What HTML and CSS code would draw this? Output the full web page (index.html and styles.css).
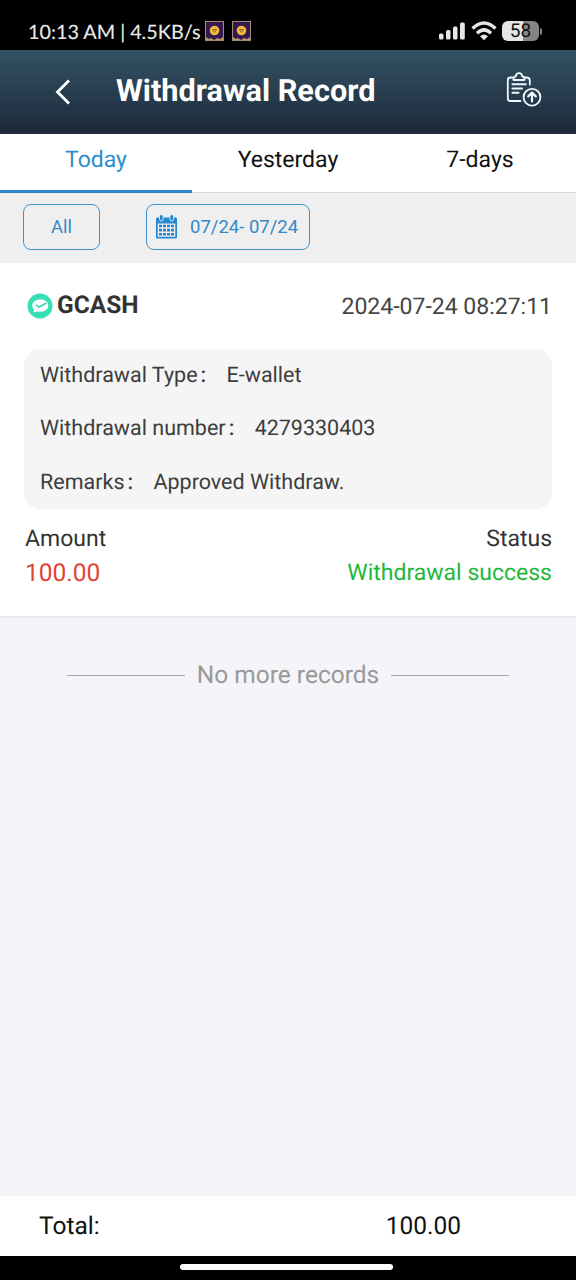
FILE: index.html
```html
<!DOCTYPE html>
<html lang="en">
<head>
<meta charset="utf-8">
<title>Withdrawal Record</title>
<link rel="stylesheet" href="styles.css">
</head>
<body>
<div class="status-bar">
  <span class="clock">10:13 AM | 4.5KB/s</span>
  <svg class="app-icon" viewBox="0 0 19 20"><rect x=".5" y=".5" width="18" height="19" fill="#34184f" stroke="#a08c72"/><path d="M1 16l3 2 2-1 3 2 3-2 3 1 3-2v3H1z" fill="#b59a6c"/><circle cx="9.5" cy="9.5" r="4.800" fill="#f0b83c"/><path d="M7.500 8.500h4l-2 2.800z" fill="none" stroke="#a8641f" stroke-width="1"/></svg>
  <svg class="app-icon" viewBox="0 0 19 20"><rect x=".5" y=".5" width="18" height="19" fill="#34184f" stroke="#a08c72"/><path d="M1 16l3 2 2-1 3 2 3-2 3 1 3-2v3H1z" fill="#b59a6c"/><circle cx="9.5" cy="9.5" r="4.800" fill="#f0b83c"/><path d="M7.500 8.500h4l-2 2.800z" fill="none" stroke="#a8641f" stroke-width="1"/></svg>
  <div class="indicators">
    <svg class="signal" viewBox="0 0 27 18" fill="#e6e6e6"><rect x="0" y="11.500" width="4.500" height="6" rx="1.500"/><rect x="7" y="8" width="4.500" height="9.500" rx="1.500"/><rect x="14" y="4.500" width="4.500" height="13" rx="1.500"/><rect x="21" y="0.500" width="4.800" height="17" rx="1.500"/></svg>
    <svg class="wifi" viewBox="0 0 26 20" fill="none" stroke="#e6e6e6" stroke-width="3.400"><path d="M1.500 7.500Q13-3.500 24.500 7.500"/><path d="M6 12.200Q13 5.500 20 12.200"/><path d="M9 15.200Q13 12 17 15.200L13 19.200Z" fill="#e6e6e6" stroke="none"/></svg>
    <div class="battery"><span>58</span></div>
    <i class="battery-tip"></i>
  </div>
</div>
<header class="header">
  <svg class="back" viewBox="0 0 16 26" fill="none" stroke="#fff" stroke-width="2.800"><path d="M14 1.500L2.500 13 14 24.500"/></svg>
  <h1 class="title">Withdrawal Record</h1>
  <svg class="report" viewBox="0 0 36 36" fill="none" stroke="#eef7fb" stroke-width="1.800" stroke-linecap="round" stroke-linejoin="round"><path d="M6.500 5.500H4.500Q1.800 5.500 1.800 8.500V26.500Q1.800 29 4.500 29H14.500M18.500 5.500H20.500Q23.800 5.500 23.800 8.500V12.500"/><path d="M7.500 8V6.500Q7.500 4.700 9.800 4.500Q10 1.200 13 1.200T16.200 4.500Q18.500 4.700 18.500 6.500V8Z"/><path d="M6.500 12.300H19.800M6.500 16.500H16M6.500 20.700H12.500" stroke-width="2.100"/><circle cx="26" cy="25.200" r="8.400"/><path d="M26 29.500V21M22.200 24.400L26 20.600L29.800 24.400" stroke-width="2.200"/></svg>
</header>
<nav class="tabs">
  <div class="tab active"><span>Today</span></div>
  <div class="tab"><span>Yesterday</span></div>
  <div class="tab"><span>7-days</span></div>
</nav>
<section class="filters">
  <button class="filter all">All</button>
  <button class="filter dates">
    <svg class="calendar" viewBox="0 0 21 24"><path d="M1.500 2.500H19.500Q21 2.500 21 4V22Q21 23.500 19.500 23.500H1.500Q0 23.500 0 22V4Q0 2.500 1.500 2.500Z" fill="#2386cf"/><g fill="#2386cf" stroke="#efefef" stroke-width=".9"><rect x="3.500" y="-.5" width="3.600" height="6.500" rx="1.800"/><rect x="13.900" y="-.5" width="3.600" height="6.500" rx="1.800"/></g><rect x="1.700" y="8.500" width="17.600" height="13.300" fill="#efefef"/><path d="M3 9.700h3v2.600H3zM7 9.700h3v2.600H7zM11 9.700h3v2.600h-3zM15 9.700h3v2.600h-3zM3 13.800h3v2.600H3zM7 13.800h3v2.600H7zM11 13.800h3v2.600h-3zM15 13.800h3v2.600h-3zM3 17.900h3v2.600H3zM7 17.900h3v2.600H7zM11 17.900h3v2.600h-3zM15 17.900h3v2.600h-3z" fill="#2386cf"/></svg>
    <span class="range">07/24- 07/24</span>
  </button>
</section>
<article class="record">
  <div class="record-head">
    <svg class="gcash" viewBox="0 0 26 26"><circle cx="13" cy="13" r="12.500" fill="#35e0b5"/><path d="M13.500 6.500c4.500 0 7.800 2.600 7.800 6s-3.500 6.300-8 6.300c-1 0-2-.1-2.800-.4L6.500 19.300l.6-2.700C5.700 15.500 5.300 14.300 5.300 12.500c0-3.500 3.700-6 8.200-6Z" fill="#fff"/><path d="M9 11.800L12 14 19.500 10" fill="none" stroke="#35d5aa" stroke-width="1.500"/></svg>
    <strong class="method">GCASH</strong>
    <time class="time">2024-07-24 08:27:11</time>
  </div>
  <dl class="details">
    <div class="detail"><dt>Withdrawal Type<span class="colon">:</span></dt><dd>E-wallet</dd></div>
    <div class="detail"><dt>Withdrawal number<span class="colon">:</span></dt><dd>4279330403</dd></div>
    <div class="detail"><dt>Remarks<span class="colon">:</span></dt><dd>Approved Withdraw.</dd></div>
  </dl>
  <div class="row labels"><span>Amount</span><span>Status</span></div>
  <div class="row values"><span class="amount">100.00</span><span class="success">Withdrawal success</span></div>
</article>
<main class="rest"><div class="end"><span>No more records</span></div></main>
<footer class="total"><span>Total:</span><span class="sum">100.00</span></footer>
<div class="home"><i></i></div>
</body>
</html>
```
FILE: styles.css
```css
* { box-sizing: border-box; }
body { margin: 0; width: 576px; height: 1280px; display: flex; flex-direction: column; overflow: hidden; background: #f4f4f9; font-family: Roboto, "Noto Sans CJK SC", sans-serif; color: #333; white-space: nowrap; text-rendering: geometricPrecision; }
svg { display: block; flex: none; overflow: visible; }
.status-bar { height: 50px; background: #000; color: #e6e6e6; display: flex; align-items: center; padding: 12px 34px 0 28px; flex: none; }
.clock { font: 500 19.8px/24px Lato, sans-serif; width: 177px; padding-top: 2px; }
.app-icon { width: 19px; height: 20px; margin-right: 8px; }
.indicators { display: flex; align-items: center; margin-left: auto; }
.signal { width: 27px; height: 18px; }
.wifi { width: 26px; height: 20px; margin: 0 5px 0 5px; }
.battery { width: 37px; height: 20px; border-radius: 6px; background: linear-gradient(90deg, #e6e6e6 58%, #858585 58%); color: #111; font-size: 19px; line-height: 20px; text-align: center; }
.battery-tip { width: 2px; height: 7px; margin-left: 1px; border-radius: 0 3px 3px 0; background: #858585; }
.header { height: 84px; flex: none; display: flex; align-items: center; padding: 0 34px 2px 55px; background: linear-gradient(#345363, #1b293a); color: #fff; }
.back { width: 16px; height: 26px; margin-top: 1px; }
.title { margin: 2px 0 0 45px; font-size: 30.7px; line-height: 36px; font-weight: 700; }
.report { width: 36px; height: 36px; margin-left: auto; margin-top: -2px; }
.tabs { height: 59px; flex: none; display: grid; grid-template-columns: repeat(3, 1fr); background: #fff; color: #111; font-size: 23px; line-height: 52px; text-align: center; }
.tab { border-bottom: 1px solid #d5d8da; }
.tab.active { color: #2c8dcf; border-bottom: 3px solid #2c85c7; }
.filters { height: 70px; flex: none; padding: 11px 23px 0; display: flex; align-items: flex-start; gap: 46px; background: #efefef; }
.filter { height: 46px; padding: 0; border: 1px solid #4293cd; border-radius: 8px; background: none; color: #3689c9; font-family: Roboto, sans-serif; font-size: 18.5px; display: flex; align-items: center; }
.all { width: 77px; justify-content: center; }
.dates { width: 164px; padding-left: 9px; gap: 13px; }
.calendar { width: 21px; height: 24px; }
.record { height: 355px; flex: none; padding: 25px 24px 0; background: #fff; border-bottom: 2px solid #e9e9ed; }
.record-head { height: 36px; display: flex; align-items: center; padding-left: 3px; }
.gcash { width: 26px; height: 26px; }
.method { margin-left: 4px; font-size: 24.500px; line-height: 30px; margin-top: -2px; }
.time { margin-left: auto; font-size: 23px; color: #444; }
.details { height: 160px; margin: 24.500px 0 0; padding: 0 16px; border-radius: 16px; background: #f5f5f5; color: #3d3d3d; font-size: 21.5px; }
.detail { height: 53.500px; display: flex; align-items: center; }
.detail dd { margin: 0; }
.colon { display: inline-block; width: 29px; padding-left: 3px; font-weight: 500; }
.row { display: flex; justify-content: space-between; padding-left: 1px; }
.labels { height: 34px; margin-top: 13.500px; font-size: 23px; line-height: 34px; }
.values { height: 34px; font-size: 23px; line-height: 34px; }
.amount { color: #dc4634; font-size: 24.500px; line-height: 33px; }
.success { color: #22b83a; }
.rest { flex: 1; padding: 41px 67px; }
.end { display: flex; align-items: center; gap: 12px; color: #999; font-size: 24.500px; line-height: 32px; }
.end::before, .end::after { content: ""; height: 1.500px; flex: 1; margin-top: 1px; background: #a8a8ab; }
.total { height: 60px; flex: none; display: flex; align-items: center; justify-content: space-between; padding: 0 115px 2px 39px; background: #fff; color: #111; font-size: 24.500px; }
.home { height: 24px; flex: none; background: #000; display: flex; justify-content: center; padding: 8px 4px 0 0; }
.home i { width: 213px; height: 6px; border-radius: 3px; background: #fff; }
```
